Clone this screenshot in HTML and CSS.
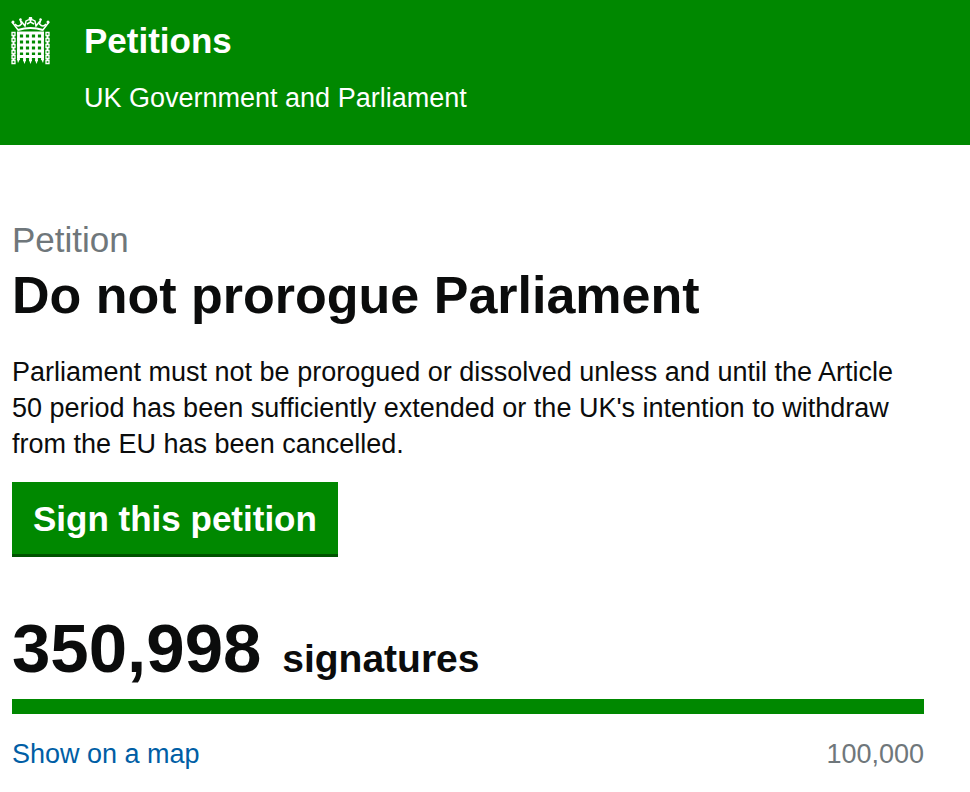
FILE: index.html
```
<!DOCTYPE html>
<html lang="en">
<head>
    <meta charset="UTF-8">
    <meta name="viewport" content="width=device-width, initial-scale=1.0">
    <title>Do not prorogue Parliament - Petitions</title>
    <link rel="stylesheet" href="styles.css">
</head>
<body>

<header class="header">
    <svg class="logo" viewBox="0 0 39 48" aria-hidden="true">
        <!-- crown -->
        <g fill="none" stroke="#fff" stroke-width="1.5">
            <path d="M1 5 L7.5 13.5 M38 5 L31.5 13.5"/>
            <path stroke-width="2.2" d="M7 13 Q19.5 9 32 13"/>
            <path d="M4 7 Q7 11 10.5 7 L9 2 M35 7 Q32 11 28.5 7 L30 2"/>
            <path d="M10 4 L14 9 L15 4 Q19.5 1 24 4 L25 9 L29 4 M19.5 1 V6 M16 7 L19.5 5 L23 7"/>
        </g>
        <g fill="#fff">
            <circle cx="2" cy="5" r="1.5"/>
            <circle cx="37" cy="5" r="1.5"/>
            <circle cx="9.5" cy="2.5" r="1.2"/>
            <circle cx="29.5" cy="2.5" r="1.2"/>
            <circle cx="19.5" cy="1.5" r="1.8"/>
        </g>
        <!-- portcullis -->
        <g fill="none" stroke="#fff" stroke-width="2.8">
            <path d="M7.5 15 V43 M13.5 15 V44 M19.5 15 V44 M25.5 15 V44 M31.5 15 V43"/>
            <path d="M6 16 H33 M6 22 H33 M6 28 H33 M6 34 H33 M6 39.5 H33"/>
        </g>
        <path fill="#fff" d="M6 42h3l-2 4zM12 43h3l-1.5 4zM18 43h3l-1.5 4zM24 43h3l-1.5 4zM30 42h3l-1 4z"/>
        <!-- chains -->
        <g fill="none" stroke="#fff" stroke-width="1.3">
            <path d="M1 15.5h3v3h-3zM1 21.5h3v3h-3zM1 27.5h3v3h-3zM1 33.5h3v3h-3zM1 38.5h3v3h-3zM1 43.5h3v3h-3z"/>
            <path d="M35 15.5h3v3h-3zM35 21.5h3v3h-3zM35 27.5h3v3h-3zM35 33.5h3v3h-3zM35 38.5h3v3h-3zM35 43.5h3v3h-3z"/>
            <path stroke-width="2" d="M2.5 18v4M2.5 24v4M2.5 30v4M2.5 36v3M2.5 41v3M36.5 18v4M36.5 24v4M36.5 30v4M36.5 36v3M36.5 41v3"/>
        </g>
    </svg>
    <div class="header-text">
        <a class="site-name" href="#">Petitions</a>
        <p class="tagline">UK Government and Parliament</p>
    </div>
</header>

<main class="container">
    <h1><span class="context">Petition</span> Do not prorogue Parliament</h1>
    <p class="intro">Parliament must not be prorogued or dissolved unless and until the Article 50 period has been sufficiently extended or the UK's intention to withdraw from the EU has been cancelled.</p>
    <button class="sign-button" type="button">Sign this petition</button>
    <p class="count"><span class="number">350,998</span> signatures</p>
    <div class="progress"></div>
    <div class="details">
        <a href="#">Show on a map</a>
        <span class="threshold">100,000</span>
    </div>
</main>

</body>
</html>
```
FILE: styles.css
```
body {
    margin: 0;
    font-family: "Liberation Sans", Arial, sans-serif;
    font-size: 27px;
    color: #0b0c0c;
    background-color: #fff;
}
.header {
    display: flex;
    gap: 34px;
    padding: 17px 11px 29px;
    background-color: #008800;
    color: #fff;
}
.logo {
    width: 39px;
    height: 48px;
}
.site-name {
    display: block;
    font-size: 35px;
    line-height: 48px;
    font-weight: bold;
    color: #fff;
    text-decoration: none;
}
.tagline {
    margin: 15px 0 0;
    line-height: 36px;
}
.container {
    padding: 72px 46px 20px 12px;
}
h1 {
    margin: 0;
    font-size: 52px;
    line-height: 66px;
}
.context {
    display: block;
    font-size: 35px;
    line-height: 45px;
    font-weight: normal;
    color: #6f777b;
}
.intro {
    margin: 26px 0 20px;
    line-height: 36px;
}
.sign-button {
    display: block;
    padding: 16px 21px 14px;
    border: none;
    border-bottom: 3px solid #005300;
    background-color: #008800;
    color: #fff;
    font-family: inherit;
    font-size: 35px;
    line-height: 42px;
    font-weight: bold;
    cursor: pointer;
}
.count {
    margin: 52px 0 0;
    font-size: 39px;
    line-height: 80px;
    font-weight: bold;
}
.number {
    margin-right: 10px;
    font-size: 69px;
}
.progress {
    height: 15px;
    background-color: #008800;
}
.details {
    display: flex;
    justify-content: space-between;
    margin-top: 22px;
    line-height: 36px;
}
.details a {
    color: #005ea5;
    text-decoration: none;
}
.threshold {
    color: #6f777b;
}
```
